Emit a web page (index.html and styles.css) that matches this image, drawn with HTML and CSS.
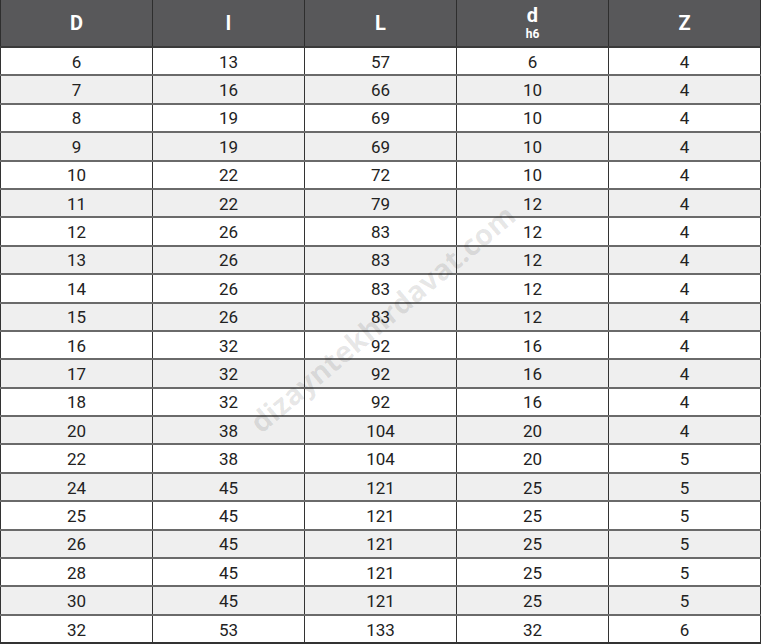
FILE: index.html
```html
<!DOCTYPE html>
<html lang="tr">
<head>
<meta charset="utf-8">
<title>Ölçü Tablosu</title>
<link rel="stylesheet" href="styles.css">
</head>
<body>
<div class="wrap">
<table class="dims">
<thead>
<tr><th>D</th><th>l</th><th>L</th><th><span class="dh">d</span><span class="tol">h6</span></th><th>Z</th></tr>
</thead>
<tbody>
<tr><td>6</td><td>13</td><td>57</td><td>6</td><td>4</td></tr>
<tr><td>7</td><td>16</td><td>66</td><td>10</td><td>4</td></tr>
<tr><td>8</td><td>19</td><td>69</td><td>10</td><td>4</td></tr>
<tr><td>9</td><td>19</td><td>69</td><td>10</td><td>4</td></tr>
<tr><td>10</td><td>22</td><td>72</td><td>10</td><td>4</td></tr>
<tr><td>11</td><td>22</td><td>79</td><td>12</td><td>4</td></tr>
<tr><td>12</td><td>26</td><td>83</td><td>12</td><td>4</td></tr>
<tr><td>13</td><td>26</td><td>83</td><td>12</td><td>4</td></tr>
<tr><td>14</td><td>26</td><td>83</td><td>12</td><td>4</td></tr>
<tr><td>15</td><td>26</td><td>83</td><td>12</td><td>4</td></tr>
<tr><td>16</td><td>32</td><td>92</td><td>16</td><td>4</td></tr>
<tr><td>17</td><td>32</td><td>92</td><td>16</td><td>4</td></tr>
<tr><td>18</td><td>32</td><td>92</td><td>16</td><td>4</td></tr>
<tr><td>20</td><td>38</td><td>104</td><td>20</td><td>4</td></tr>
<tr><td>22</td><td>38</td><td>104</td><td>20</td><td>5</td></tr>
<tr><td>24</td><td>45</td><td>121</td><td>25</td><td>5</td></tr>
<tr><td>25</td><td>45</td><td>121</td><td>25</td><td>5</td></tr>
<tr><td>26</td><td>45</td><td>121</td><td>25</td><td>5</td></tr>
<tr><td>28</td><td>45</td><td>121</td><td>25</td><td>5</td></tr>
<tr><td>30</td><td>45</td><td>121</td><td>25</td><td>5</td></tr>
<tr><td>32</td><td>53</td><td>133</td><td>32</td><td>6</td></tr>
</tbody>
</table>
<div class="watermark">dizayntekhirdavat.com</div>
</div>
</body>
</html>
```
FILE: styles.css
```css
html, body {
  margin: 0;
  padding: 0;
  background: #ffffff;
}
.wrap {
  position: relative;
  width: 762px;
  height: 644px;
  overflow: hidden;
}
.dims {
  width: 761px;
  border-collapse: collapse;
  table-layout: fixed;
  font-family: Roboto, "Liberation Sans", sans-serif;
  color: #222222;
}
.dims th {
  background: #58585a;
  color: #ffffff;
  font-weight: 700;
  font-size: 20px;
  height: 46px;
  padding: 0;
  text-align: center;
  vertical-align: middle;
  border-left: 1px solid #2e2e2e;
  border-right: 1px solid #2e2e2e;
  border-bottom: 2px solid #3a3a3a;
  line-height: 1;
}
.dims th .dh {
  display: block;
  font-size: 20px;
  line-height: 18px;
  margin-top: 0;
}
.dims th .tol {
  display: block;
  font-size: 12px;
  line-height: 14px;
  margin-top: 3px;
}
.dims td {
  height: 25.4px;
  padding: 1px 0 0;
  text-align: center;
  vertical-align: middle;
  font-size: 17px;
  font-weight: 400;
  border-left: 1px solid #333333;
  border-right: 1px solid #333333;
  border-bottom: 2px solid #6a6a6a;
}
.dims tbody tr:nth-child(even) td {
  background: #efefef;
}
.dims tbody tr:last-child td {
  border-bottom: 2px solid #333333;
}
.watermark {
  position: absolute;
  left: 382px;
  top: 318px;
  transform: translate(-50%, -50%) rotate(-40deg);
  font-family: "Open Sans", "DejaVu Sans", sans-serif;
  font-weight: 700;
  font-size: 29px;
  letter-spacing: 0;
  color: rgba(0, 0, 0, 0.1);
  white-space: nowrap;
  pointer-events: none;
}
```
